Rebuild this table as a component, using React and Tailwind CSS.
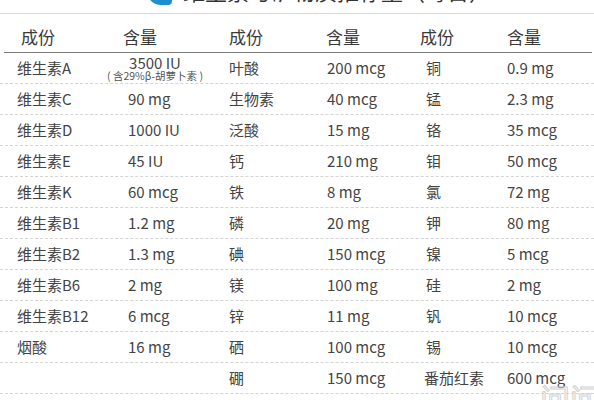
import React from 'react';

const rows = [
  ['维生素A', null, '叶酸', '200 mcg', '铜', '0.9 mg'],
  ['维生素C', '90 mg', '生物素', '40 mcg', '锰', '2.3 mg'],
  ['维生素D', '1000 IU', '泛酸', '15 mg', '铬', '35 mcg'],
  ['维生素E', '45 IU', '钙', '210 mg', '钼', '50 mcg'],
  ['维生素K', '60 mcg', '铁', '8 mg', '氯', '72 mg'],
  ['维生素B1', '1.2 mg', '磷', '20 mg', '钾', '80 mg'],
  ['维生素B2', '1.3 mg', '碘', '150 mcg', '镍', '5 mcg'],
  ['维生素B6', '2 mg', '镁', '100 mg', '硅', '2 mg'],
  ['维生素B12', '6 mcg', '锌', '11 mg', '钒', '10 mcg'],
  ['烟酸', '16 mg', '硒', '100 mcg', '锡', '10 mcg'],
  ['', '', '硼', '150 mcg', '番茄红素', '600 mcg'],
];

const Row = ({ r }) => (
  <div className="grid grid-cols-[110px_112px_98px_95px_85px_1fr] h-[31px] items-center border-b border-dashed border-[#d4d4d4] text-[15px] text-[#444]">
    <div className="pl-[17px]">{r[0]}</div>
    <div className="pl-[18px]">
      {r[1] === null ? (
        <div className="w-[104px] -ml-[25px] flex flex-col items-center leading-none whitespace-nowrap">
          <span className="text-[15px]">3500 IU</span>
          <span className="text-[10.5px] mt-[1px] text-[#555]">( 含29%β-胡萝卜素 )</span>
        </div>
      ) : (
        r[1]
      )}
    </div>
    <div className="pl-[7px]">{r[2]}</div>
    <div className="pl-[7px]">{r[3]}</div>
    <div className={r[4].length > 1 ? 'pl-[9px]' : 'pl-[11px]'}>{r[4]}</div>
    <div className="pl-[7px]">{r[5]}</div>
  </div>
);

export default function App() {
  return (
    <div className="relative w-[594px] h-[400px] overflow-hidden bg-white font-['Noto_Sans_CJK_SC','Noto_Sans',sans-serif]">
      {/* title, cut off at the top edge */}
      <div className="h-[14px] overflow-hidden border-b border-[#dcdcdc] flex items-start pl-[147px]">
        <div className="w-[25px] h-[24px] -mt-[19px] bg-[#1d8fd1] rounded-bl-[14px] rounded-br-[4px]" />
        <span className="ml-[11px] -mt-[21px] text-[22px] leading-[22px] text-[#333] whitespace-nowrap">
          维生素与矿物质推荐量（每日）
        </span>
      </div>

      {/* header */}
      <div className="ml-[4px] mr-[2px] grid grid-cols-[106px_112px_98px_95px_85px_1fr] h-[39px] items-center pt-[8px] border-b-[1.5px] border-[#7a7a7a] text-[17px] text-[#3a3a3a]">
        <div className="pl-[17px]">成份</div>
        <div className="pl-[13px]">含量</div>
        <div className="pl-[7px]">成份</div>
        <div className="pl-[6px]">含量</div>
        <div className="pl-[5px]">成份</div>
        <div className="pl-[7px]">含量</div>
      </div>

      <div>
        {rows.map((r, i) => (
          <Row key={i} r={r} />
        ))}
      </div>

      {/* watermark */}
      <div className="absolute right-[-6px] bottom-[-12px] text-[30px] leading-none text-transparent [-webkit-text-stroke:1px_#d0d0d0]">
        问问
      </div>
    </div>
  );
}
